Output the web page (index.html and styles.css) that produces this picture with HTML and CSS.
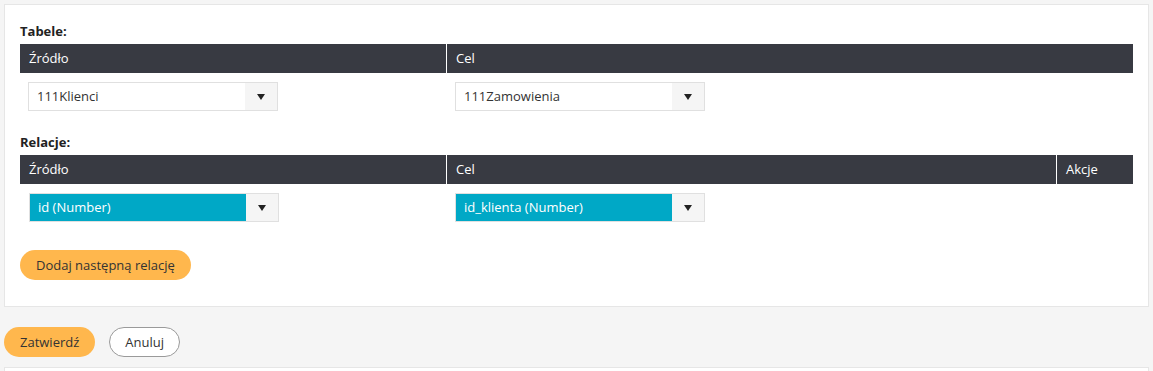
FILE: index.html
```html
<!DOCTYPE html>
<html lang="pl">
<head>
    <meta charset="utf-8">
    <meta name="viewport" content="width=device-width, initial-scale=1">
    <title>Relacje tabel</title>
    <link rel="stylesheet" href="styles.css">
</head>
<body>
    <div class="page">
        <div class="card">
            <div class="label">Tabele:</div>
            <div class="grid grid-two">
                <div class="head">Źródło</div>
                <div class="head">Cel</div>
                <div class="cell">
                    <div class="select">
                        <span class="select-value">111Klienci</span>
                        <span class="select-arrow"></span>
                    </div>
                </div>
                <div class="cell">
                    <div class="select">
                        <span class="select-value">111Zamowienia</span>
                        <span class="select-arrow"></span>
                    </div>
                </div>
            </div>

            <div class="label label-next">Relacje:</div>
            <div class="grid grid-three">
                <div class="head">Źródło</div>
                <div class="head">Cel</div>
                <div class="head">Akcje</div>
                <div class="cell">
                    <div class="select picked">
                        <span class="select-value">id (Number)</span>
                        <span class="select-arrow"></span>
                    </div>
                </div>
                <div class="cell">
                    <div class="select picked">
                        <span class="select-value">id_klienta (Number)</span>
                        <span class="select-arrow"></span>
                    </div>
                </div>
                <div class="cell"></div>
            </div>

            <button class="btn btn-orange btn-add">Dodaj następną relację</button>
        </div>

        <div class="actions">
            <button class="btn btn-orange">Zatwierdź</button>
            <button class="btn btn-outline">Anuluj</button>
        </div>

        <div class="card card-next"></div>
    </div>
</body>
</html>
```

FILE: styles.css
```css
* {
    margin: 0;
    padding: 0;
    box-sizing: border-box;
}
body {
    font-family: "Open Sans", "Noto Sans", Arial, sans-serif;
    font-size: 13px;
    color: #333;
    background-color: #f5f5f5;
    overflow: hidden;
}
.page {
    padding: 4px 4px 0 4px;
}
.card {
    background: #fff;
    border: 1px solid #e6e6e6;
    padding: 16px 15px 26px 15px;
}
.card-next {
    margin-top: 10px;
    height: 40px;
    padding: 0;
}
.label {
    font-weight: 700;
    line-height: 20px;
    color: #222;
    margin-bottom: 3px;
}
.label-next {
    margin-top: 12px;
}
.grid {
    display: grid;
}
.grid-two {
    grid-template-columns: 426px 1fr;
}
.grid-three {
    grid-template-columns: 426px 1fr 77px;
}
.head {
    background: #383a42;
    color: #fff;
    height: 29px;
    line-height: 29px;
    padding: 0 9px;
    border-left: 1px solid #fff;
}
.head:first-child {
    border-left: none;
}
.cell {
    padding: 9px 9px;
}
.grid-two .cell:nth-child(3) {
    padding-left: 8px;
}
.select {
    display: flex;
    width: 250px;
    height: 29px;
    border: 1px solid #e0e0e0;
    background: #fff;
}
.select-value {
    flex: 1;
    line-height: 27px;
    padding: 0 8px;
    white-space: nowrap;
}
.picked .select-value {
    background: #00a8c6;
    color: #fff;
}
.select-arrow {
    width: 32px;
    background: #f5f5f5;
    display: flex;
    align-items: center;
    justify-content: center;
}
.select-arrow::after {
    content: "";
    border-left: 4px solid transparent;
    border-right: 4px solid transparent;
    border-top: 6px solid #222;
}
.btn {
    font-family: inherit;
    font-size: 13px;
    color: #333;
    height: 30px;
    border-radius: 15px;
    padding: 0 16px;
    cursor: pointer;
}
.btn-orange {
    background: #ffb74d;
    border: none;
}
.btn-outline {
    background: #fff;
    border: 1px solid #9a9a9a;
    padding: 0 15px;
}
.btn-add {
    margin-top: 19px;
}
.actions {
    display: flex;
    gap: 14px;
    margin-top: 20px;
}
```
